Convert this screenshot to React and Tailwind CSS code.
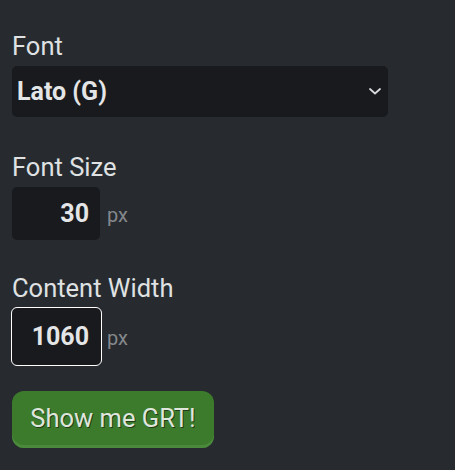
export default function App() {
  return (
    <div
      className="min-h-[470px] w-full bg-[#272b2f] pl-3 pt-8 text-[#dfe1e3]"
      style={{ fontFamily: "Roboto, 'Liberation Sans', sans-serif" }}
    >
      <div className="flex flex-col items-start">
        <label className="h-7 text-[25.5px] leading-[28px]">Font</label>
        <div className="mt-[6px] flex h-[51px] w-[376px] items-center justify-between rounded-[5px] bg-[#181a1d] pl-[5px] pr-[7px]">
          <span className="text-[25px] font-bold leading-[30px] text-[#e4e5e6]">Lato (G)</span>
          <svg width="12" height="7" viewBox="0 0 12 7" fill="none">
            <path d="M1 1l5 4.5L11 1" stroke="#d8d9da" strokeWidth="1.8" strokeLinecap="round" strokeLinejoin="round" />
          </svg>
        </div>

        <label className="mt-9 h-7 text-[25.5px] leading-[28px]">Font Size</label>
        <div className="mt-[6px] flex items-baseline">
          <div className="flex h-[53px] w-[88px] items-center justify-end rounded-[5px] bg-[#181a1d] pr-[11px]">
            <span className="text-[25px] font-bold leading-[30px] text-[#e4e5e6]">30</span>
          </div>
          <span className="ml-[7px] text-[20px] text-[#84888c]">px</span>
        </div>

        <label className="mt-[34px] h-7 text-[25.5px] leading-[28px]">Content Width</label>
        <div className="mt-[6px] flex items-baseline">
          <div className="flex h-[57px] w-[89px] items-center justify-end rounded-[5px] bg-[#181a1d] pr-[12px] outline outline-1 outline-white">
            <span className="text-[25px] font-bold leading-[30px] text-[#e4e5e6]">1060</span>
          </div>
          <span className="ml-[6px] text-[20px] text-[#84888c]">px</span>
        </div>

        <button className="mt-[26px] flex h-[57px] w-[202px] items-center justify-center rounded-[12px] bg-[#3d7b2c] pb-[2px] text-[25.5px] text-[#dfe6dc] shadow-[inset_0_-3px_0_#4b8a3c] [text-shadow:1px_1px_0_#1f3d16]">
          Show me GRT!
        </button>
      </div>
    </div>
  );
}
